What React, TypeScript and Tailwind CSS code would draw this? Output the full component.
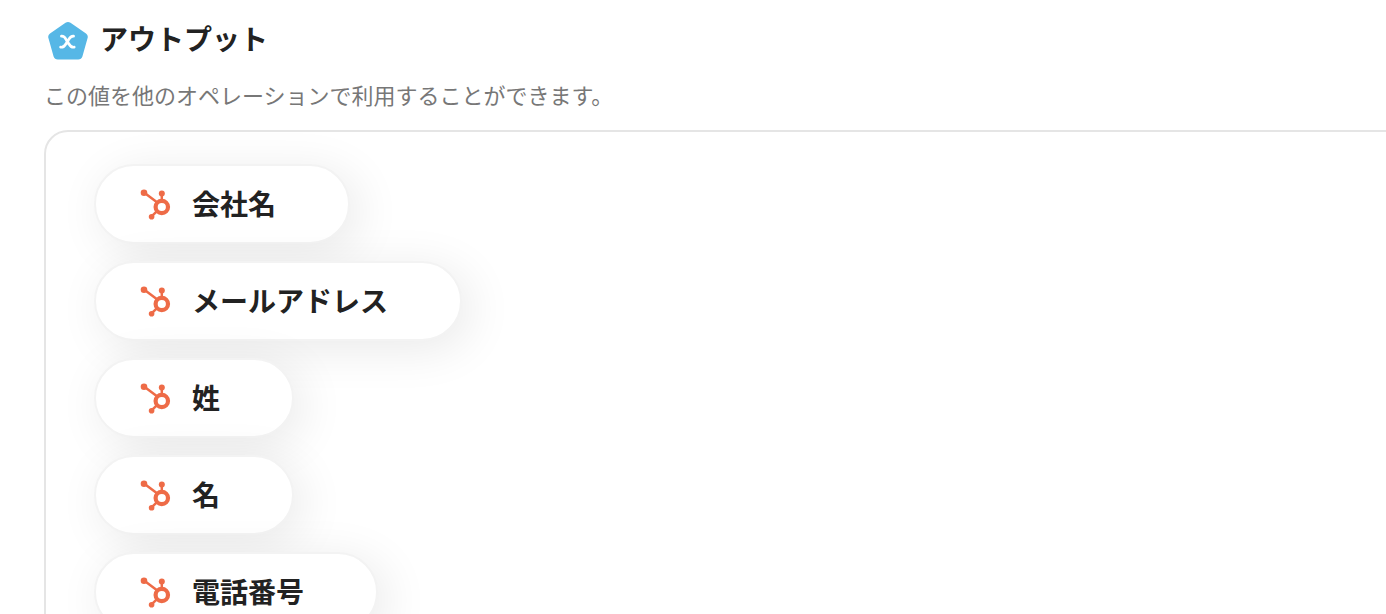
const outputs: string[] = ["会社名", "メールアドレス", "姓", "名", "電話番号"];

function OutputBadge() {
  return (
    <svg className="size-10 shrink-0" viewBox="0 0 40 40" aria-hidden="true">
      <path
        d="M17.5 2.8Q20 1 22.5 2.8L38 13.4Q40.4 15.2 39.6 18L34.4 36.4Q33.4 39.4 30.2 39.4H9.8Q6.6 39.4 5.6 36.4L0.4 18Q-0.4 15.2 2 13.4Z"
        fill="#56b7e6"
      />
      <path
        d="M13.4 16.2C17.4 15.8 17.4 19.2 19.4 21.6S21.8 27.8 26.2 27.2M25.6 16.2C21.6 15.8 21.4 19.2 19.4 21.6S17 27.8 12.6 27.2"
        fill="none"
        stroke="#fff"
        strokeWidth="2.7"
        strokeLinecap="round"
      />
    </svg>
  );
}

function HubspotIcon() {
  return (
    <svg className="size-8 shrink-0" viewBox="0 0 32 32" aria-hidden="true">
      <g stroke="#ee6b47" fill="none">
        <path d="M4 4.6L18 15" strokeWidth="2.5" />
        <path d="M21.8 5.6V14" strokeWidth="2.5" />
        <path d="M17 23.2L11.6 28.4" strokeWidth="2.5" />
        <circle cx="21.8" cy="19" r="6.2" strokeWidth="4.2" />
      </g>
      <g fill="#ee6b47">
        <circle cx="4" cy="4.8" r="3.3" />
        <circle cx="21.8" cy="5.6" r="3" />
        <circle cx="11.6" cy="28.8" r="2.8" />
      </g>
    </svg>
  );
}

export default function App() {
  return (
    <main className="h-screen overflow-hidden bg-white pl-11 pt-5 font-['Noto_Sans_CJK_JP',sans-serif] text-[#222]">
      <header>
        <div className="flex items-center gap-3 pl-1">
          <OutputBadge />
          <h1 className="pb-1 text-[28px] leading-9 font-bold">アウトプット</h1>
        </div>
        <p className="mt-[18px] text-[22px] leading-8 text-[#777]">
          この値を他のオペレーションで利用することができます。
        </p>
      </header>
      <section className="-mr-8 mt-5 rounded-[24px] border-2 border-[#e5e5e5] px-12 py-8">
        <ul className="flex flex-col items-start gap-[17px]">
          {outputs.map((label) => (
            <li
              key={label}
              className="relative flex h-20 items-center gap-5 rounded-full border-2 border-[#f3f3f3] bg-white pr-[72px] pl-11 shadow-[8px_8px_48px_rgba(0,0,0,0.09)]"
            >
              <HubspotIcon />
              <span className="pb-0.5 text-[28px] leading-10 font-bold">{label}</span>
            </li>
          ))}
        </ul>
      </section>
    </main>
  );
}
